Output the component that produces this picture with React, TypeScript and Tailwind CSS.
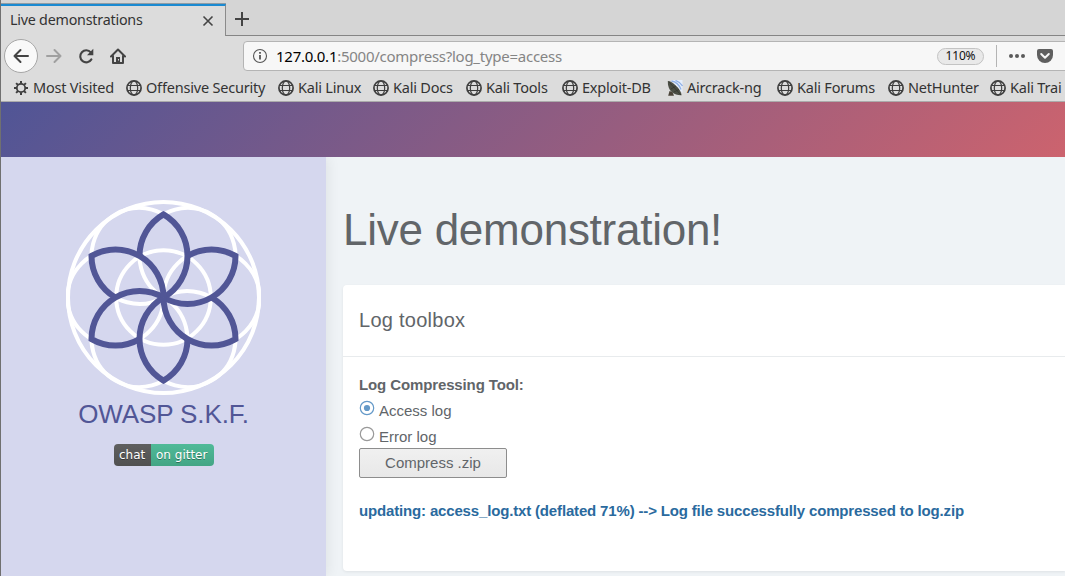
import React from "react";

const UI = "font-['Noto_Sans',sans-serif]";

function Globe() {
  return (
    <svg width="16" height="16" viewBox="0 0 16 16" fill="none" stroke="#3e3e3e" className="shrink-0">
      <circle cx="8" cy="8" r="7.1" strokeWidth="1.7" />
      <ellipse cx="8" cy="8" rx="3.7" ry="7" strokeWidth="1.2" />
      <path d="M1.5 5.5h13M1.5 10.5h13" strokeWidth="1.2" />
    </svg>
  );
}

function Gear() {
  return (
    <svg width="16" height="16" viewBox="0 0 16 16" fill="none" stroke="#3e3e3e" className="shrink-0">
      <circle cx="8" cy="8" r="4.2" strokeWidth="1.8" />
      <path
        d="M8 1v2.6M8 12.4V15M1 8h2.6M12.4 8H15M3.1 3.1l1.8 1.8M11.1 11.1l1.8 1.8M3.1 12.9l1.8-1.8M11.1 4.9l1.8-1.8"
        strokeWidth="2"
      />
    </svg>
  );
}

function Dish() {
  return (
    <svg width="16" height="16" viewBox="0 0 16 16" className="shrink-0">
      <path d="M4 0H15.5V13Z" fill="#e6eefb" />
      <path d="M4.5 1Q11 2 14 9.500M8.500 .5Q13 2 15.500 6" fill="none" stroke="#8fb0e6" strokeWidth="1.3" />
      <path d="M2.500 11L1.200 15.800H7L5.500 12Z" fill="#4a4338" />
      <path d="M.8 1C4 .5 14 8.500 14.600 15.200C8 15.500 .5 12 .8 1Z" fill="#4b4e45" />
      <path d="M2 2L14 15M4 9L9 6M7 12L12 9.500" stroke="#31332d" strokeWidth=".7" />
    </svg>
  );
}

type Mark = { label: string; width: string; icon: React.ReactNode };

const marks: Mark[] = [
  { label: "Most Visited", width: "w-[113px]", icon: <Gear /> },
  { label: "Offensive Security", width: "w-[152px]", icon: <Globe /> },
  { label: "Kali Linux", width: "w-[95px]", icon: <Globe /> },
  { label: "Kali Docs", width: "w-[93px]", icon: <Globe /> },
  { label: "Kali Tools", width: "w-[96px]", icon: <Globe /> },
  { label: "Exploit-DB", width: "w-[105px]", icon: <Globe /> },
  { label: "Aircrack-ng", width: "w-[110px]", icon: <Dish /> },
  { label: "Kali Forums", width: "w-[111px]", icon: <Globe /> },
  { label: "NetHunter", width: "w-[102px]", icon: <Globe /> },
  { label: "Kali Trai", width: "w-[75px]", icon: <Globe /> },
];

function Tabs() {
  return (
    <div className="flex h-9 shrink-0 bg-[#d5d5d5] pt-1">
      <div className="flex w-[225px] shrink-0 items-center border-t-2 border-r border-t-[#1a8ad2] border-r-[#8b8b8b] bg-[#dcdcdc] pl-[9px] text-[#333] shadow-[0_-1px_0_#8f9ca5]">
        <span className="w-[192px] pb-[3px] text-[14.300px] leading-[20px] tracking-[-0.220px]">Live demonstrations</span>
        <svg width="12" height="12" viewBox="0 0 12 12" stroke="#444" strokeWidth="1.6">
          <path d="M1.500 1.500l9 9M10.500 1.500l-9 9" />
        </svg>
      </div>
      <div className="flex flex-1 border-b border-[#858585] pl-[9px] pt-2">
        <svg width="14" height="14" viewBox="0 0 14 14" stroke="#444" strokeWidth="2">
          <path d="M7 0v14M0 7h14" />
        </svg>
      </div>
    </div>
  );
}

function Toolbar() {
  return (
    <div className="flex h-10 shrink-0 items-center overflow-hidden pl-[3px]">
      <div className="flex size-[34px] shrink-0 items-center justify-center rounded-full border border-[#a6a6a6] bg-[#f9f9f9]">
        <svg width="16" height="16" viewBox="0 0 16 16" fill="none" stroke="#444" strokeWidth="2" strokeLinecap="round" strokeLinejoin="round">
          <path d="M15 8H1.500M7.500 2L1.500 8l6 6" />
        </svg>
      </div>
      <svg width="16" height="16" viewBox="0 0 16 16" fill="none" stroke="#a0a0a0" strokeWidth="2" strokeLinecap="round" strokeLinejoin="round" className="ml-2 shrink-0">
        <path d="M1 8h13.500M8.500 2l6 6-6 6" />
      </svg>
      <svg width="16" height="16" viewBox="0 0 16 16" className="ml-4 shrink-0">
        <path d="M13.400 11.400A6 6 0 1 1 12.800 4.400" fill="none" stroke="#444" strokeWidth="2.100" strokeLinecap="round" />
        <path d="M15.300 .8v6.400H9Z" fill="#444" />
      </svg>
      <svg width="16" height="16" viewBox="0 0 16 16" className="ml-4 shrink-0">
        <path d="M1 8.500L8 1.500l7 7M3 8v7h10V8" fill="none" stroke="#444" strokeWidth="2" strokeLinecap="round" strokeLinejoin="round" />
        <path d="M6 15.500V9h4v6.500Z" fill="#444" />
        <path d="M8.500 11v1.500" stroke="#ddd" strokeWidth="1" />
      </svg>
      <div className="ml-[117px] flex h-[30px] w-[900px] shrink-0 items-center rounded-[4px] border border-[#b4b4b4] bg-[#f7f7f7] pl-2">
        <svg width="16" height="16" viewBox="0 0 16 16" fill="none" className="shrink-0">
          <circle cx="8" cy="8" r="6.500" stroke="#555" strokeWidth="1.100" />
          <path d="M8 7v4.500M8 4v1.800" stroke="#555" strokeWidth="1.800" />
        </svg>
        <span className="ml-2 w-[661px] whitespace-nowrap text-[15px] leading-[20px] tracking-[-0.260px] text-[#858585]">
          <span className="text-black">127.0.0.1</span>:5000/compress?log_type=access
        </span>
        <span className="flex h-[17px] w-[47px] items-center justify-center rounded-full border border-[#c3c3c3] bg-[#e9e9e9] text-[12px] tracking-[-0.200px] text-[#111]">110%</span>
        <span className="ml-3 h-[22px] w-px bg-[#b4b4b4]" />
        <svg width="16" height="4" viewBox="0 0 16 4" fill="#5a5a5a" className="ml-3">
          <circle cx="2" cy="2" r="2" />
          <circle cx="8" cy="2" r="2" />
          <circle cx="14" cy="2" r="2" />
        </svg>
        <svg width="16" height="14" viewBox="0 0 16 14" className="ml-3">
          <path d="M2 0H14a2 2 0 0 1 2 2V6A8 8 0 0 1 0 6V2A2 2 0 0 1 2 0Z" fill="#5f5f5f" />
          <path d="M4.200 5l3.800 3.700L11.800 5" fill="none" stroke="#f7f7f7" strokeWidth="2" strokeLinecap="round" strokeLinejoin="round" />
        </svg>
      </div>
    </div>
  );
}

function Bookmarks() {
  return (
    <div className="flex h-[26px] shrink-0 overflow-hidden border-b border-[#ababab] pl-3 text-[14.500px] leading-[22px] tracking-[-0.200px] text-[#333]">
      {marks.map((m) => (
        <div key={m.label} className={`flex h-6 shrink-0 items-center gap-1 whitespace-nowrap ${m.width}`}>
          {m.icon}
          <span className="pb-[2px]">{m.label}</span>
        </div>
      ))}
    </div>
  );
}

function Logo() {
  const angles = [0, 60, 120, 180, 240, 300];
  return (
    <svg width="195" height="195" viewBox="-97.5 -97.5 195 195" fill="none">
      <g stroke="#fff" strokeWidth="4">
        <circle r="95.500" />
        <circle r="47.300" />
        {angles.map((a) => (
          <circle key={a} cx="48" r="48" transform={`rotate(${a})`} />
        ))}
      </g>
      <g stroke="#515696" strokeWidth="6">
        {angles.map((a) => (
          <path key={a} d="M-24 -41.570A48 48 0 0 1 0 -83.140A48 48 0 0 1 0 0" transform={`rotate(${a})`} />
        ))}
      </g>
    </svg>
  );
}

function Sidebar() {
  return (
    <aside className="z-10 flex w-[325px] shrink-0 flex-col items-center bg-[#d5d7ee] pt-[43px] shadow-[2px_0_12px_rgba(0,0,0,0.07)]">
      <Logo />
      <div className="mt-1 text-[26px] leading-[30px] tracking-[-0.120px] text-[#515696]">OWASP S.K.F.</div>
      <div className="mt-[15px] flex h-[22px] w-[100px] overflow-hidden rounded-[4px] font-['DejaVu_Sans',sans-serif] text-[12px] leading-[22px] text-white [text-shadow:0_1px_0_rgba(0,0,0,0.35)]">
        <span className="w-[37px] bg-linear-to-b from-[#5f5f5f] to-[#505050] pl-[5.500px]">chat</span>
        <span className="flex-1 bg-linear-to-b from-[#50ba98] to-[#43a585] pl-[5.500px]">on gitter</span>
      </div>
    </aside>
  );
}

function Radio({ on, label }: { on: boolean; label: string }) {
  return (
    <label className="flex h-[26px] items-start">
      <svg width="16" height="16" viewBox="0 0 16 16" className="mt-[2px] shrink-0">
        <circle cx="8" cy="8" r="6.700" fill="#fff" stroke={on ? "#6499c8" : "#999"} strokeWidth="1.200" />
        {on && <circle cx="8" cy="8" r="3.100" fill="#6499c8" />}
      </svg>
      <span className="ml-1 leading-[26px]">{label}</span>
    </label>
  );
}

function Content() {
  return (
    <main className="flex min-w-0 flex-1 flex-col bg-[#eff3f6] pl-[17px] pt-[48px] text-[#616569]">
      <h1 className="h-[80px] text-[44px] leading-[50px] tracking-[-0.260px]">Live demonstration!</h1>
      <section className="h-[286px] shrink-0 rounded-l-[4px] bg-white shadow-[0_1px_3px_rgba(0,0,0,0.07)]">
        <h2 className="h-[72px] border-b border-[#e8ebed] pl-4 text-[20px] leading-[70px] tracking-[0.260px]">Log toolbox</h2>
        <div className="pl-4 pt-[15px] text-[15px]">
          <div className="h-[26px] font-bold leading-[26px] tracking-[-0.120px]">Log Compressing Tool:</div>
          <Radio on label="Access log" />
          <Radio on={false} label="Error log" />
          <button className="-mt-[2px] block h-[30px] w-[148px] rounded-[2px] border border-[#8d8d8d] bg-linear-to-b from-[#f0f0f0] to-[#e8e8e8] leading-[28px]">Compress .zip</button>
          <p className="mt-5 font-bold leading-[26px] tracking-[-0.160px] text-[#2a6a9e]">updating: access_log.txt (deflated 71%) --&gt; Log file successfully compressed to log.zip</p>
        </div>
      </section>
    </main>
  );
}

export default function App() {
  return (
    <div className="flex h-[576px] w-[1065px] flex-col overflow-hidden border-l border-[#707070] bg-[#dcdcdc] font-['Liberation_Sans',sans-serif]">
      <div className={`flex flex-col ${UI}`}>
        <Tabs />
        <Toolbar />
        <Bookmarks />
      </div>
      <header className="h-[55px] shrink-0 bg-[linear-gradient(135deg,#505596,#cc636e)]" />
      <div className="flex min-h-0 flex-1 overflow-hidden">
        <Sidebar />
        <Content />
      </div>
    </div>
  );
}
